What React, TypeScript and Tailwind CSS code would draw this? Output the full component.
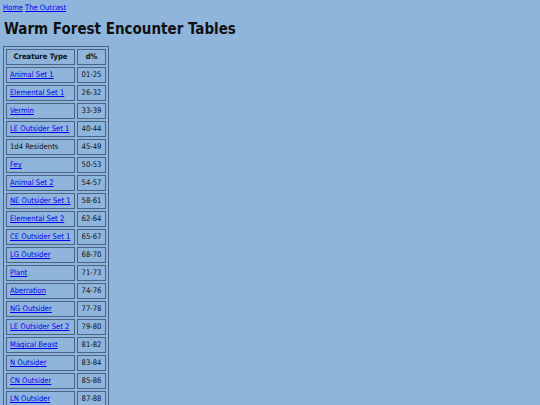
import React from "react";

const rows: [string, string, boolean][] = [
  ["Animal Set 1", "01-25", true],
  ["Elemental Set 1", "26-32", true],
  ["Vermin", "33-39", true],
  ["LE Outsider Set 1", "40-44", true],
  ["1d4 Residents", "45-49", false],
  ["Fey", "50-53", true],
  ["Animal Set 2", "54-57", true],
  ["NE Outsider Set 1", "58-61", true],
  ["Elemental Set 2", "62-64", true],
  ["CE Outsider Set 1", "65-67", true],
  ["LG Outsider", "68-70", true],
  ["Plant", "71-73", true],
  ["Aberration", "74-76", true],
  ["NG Outsider", "77-78", true],
  ["LE Outsider Set 2", "79-80", true],
  ["Magical Beast", "81-82", true],
  ["N Outsider", "83-84", true],
  ["CN Outsider", "85-86", true],
  ["LN Outsider", "87-88", true],
  ["CG Outsider", "89-90", true],
];

export default function App() {
  return (
    <div
      className="h-[405px] overflow-hidden bg-[#8fb5dd] text-[#111] px-[3px] pt-[3px]"
      style={{ fontFamily: '"DejaVu Sans Condensed", "DejaVu Sans", sans-serif' }}
    >
      <div className="text-[7.5px] leading-[9px] whitespace-nowrap">
        <a href="#" className="text-[#0000ee] underline">Home</a>{" "}
        <a href="#" className="text-[#0000ee] underline">The Outcast</a>
      </div>
      <h1 className="text-[15px] font-bold leading-[20px] mt-[7px] ml-[1px] whitespace-nowrap">
        Warm Forest Encounter Tables
      </h1>
      <table className="mt-[7px] border border-[#4c6483] border-separate border-spacing-[2px] text-[7.6px] whitespace-nowrap">
        <thead>
          <tr>
            <th className="border border-[#4c6483] h-[16px] w-[69px] px-[3px] font-bold text-center">Creature Type</th>
            <th className="border border-[#4c6483] h-[16px] w-[29px] px-[3px] font-bold text-center">d%</th>
          </tr>
        </thead>
        <tbody>
          {rows.map(([n, r, link]) => (
            <tr key={n}>
              <td className="border border-[#4c6483] h-[16px] px-[3px] text-left">
                {link ? (
                  <a href="#" className="text-[#0000ee] underline">{n}</a>
                ) : (
                  n
                )}
              </td>
              <td className="border border-[#4c6483] h-[16px] px-[3px] text-center">{r}</td>
            </tr>
          ))}
        </tbody>
      </table>
    </div>
  );
}
